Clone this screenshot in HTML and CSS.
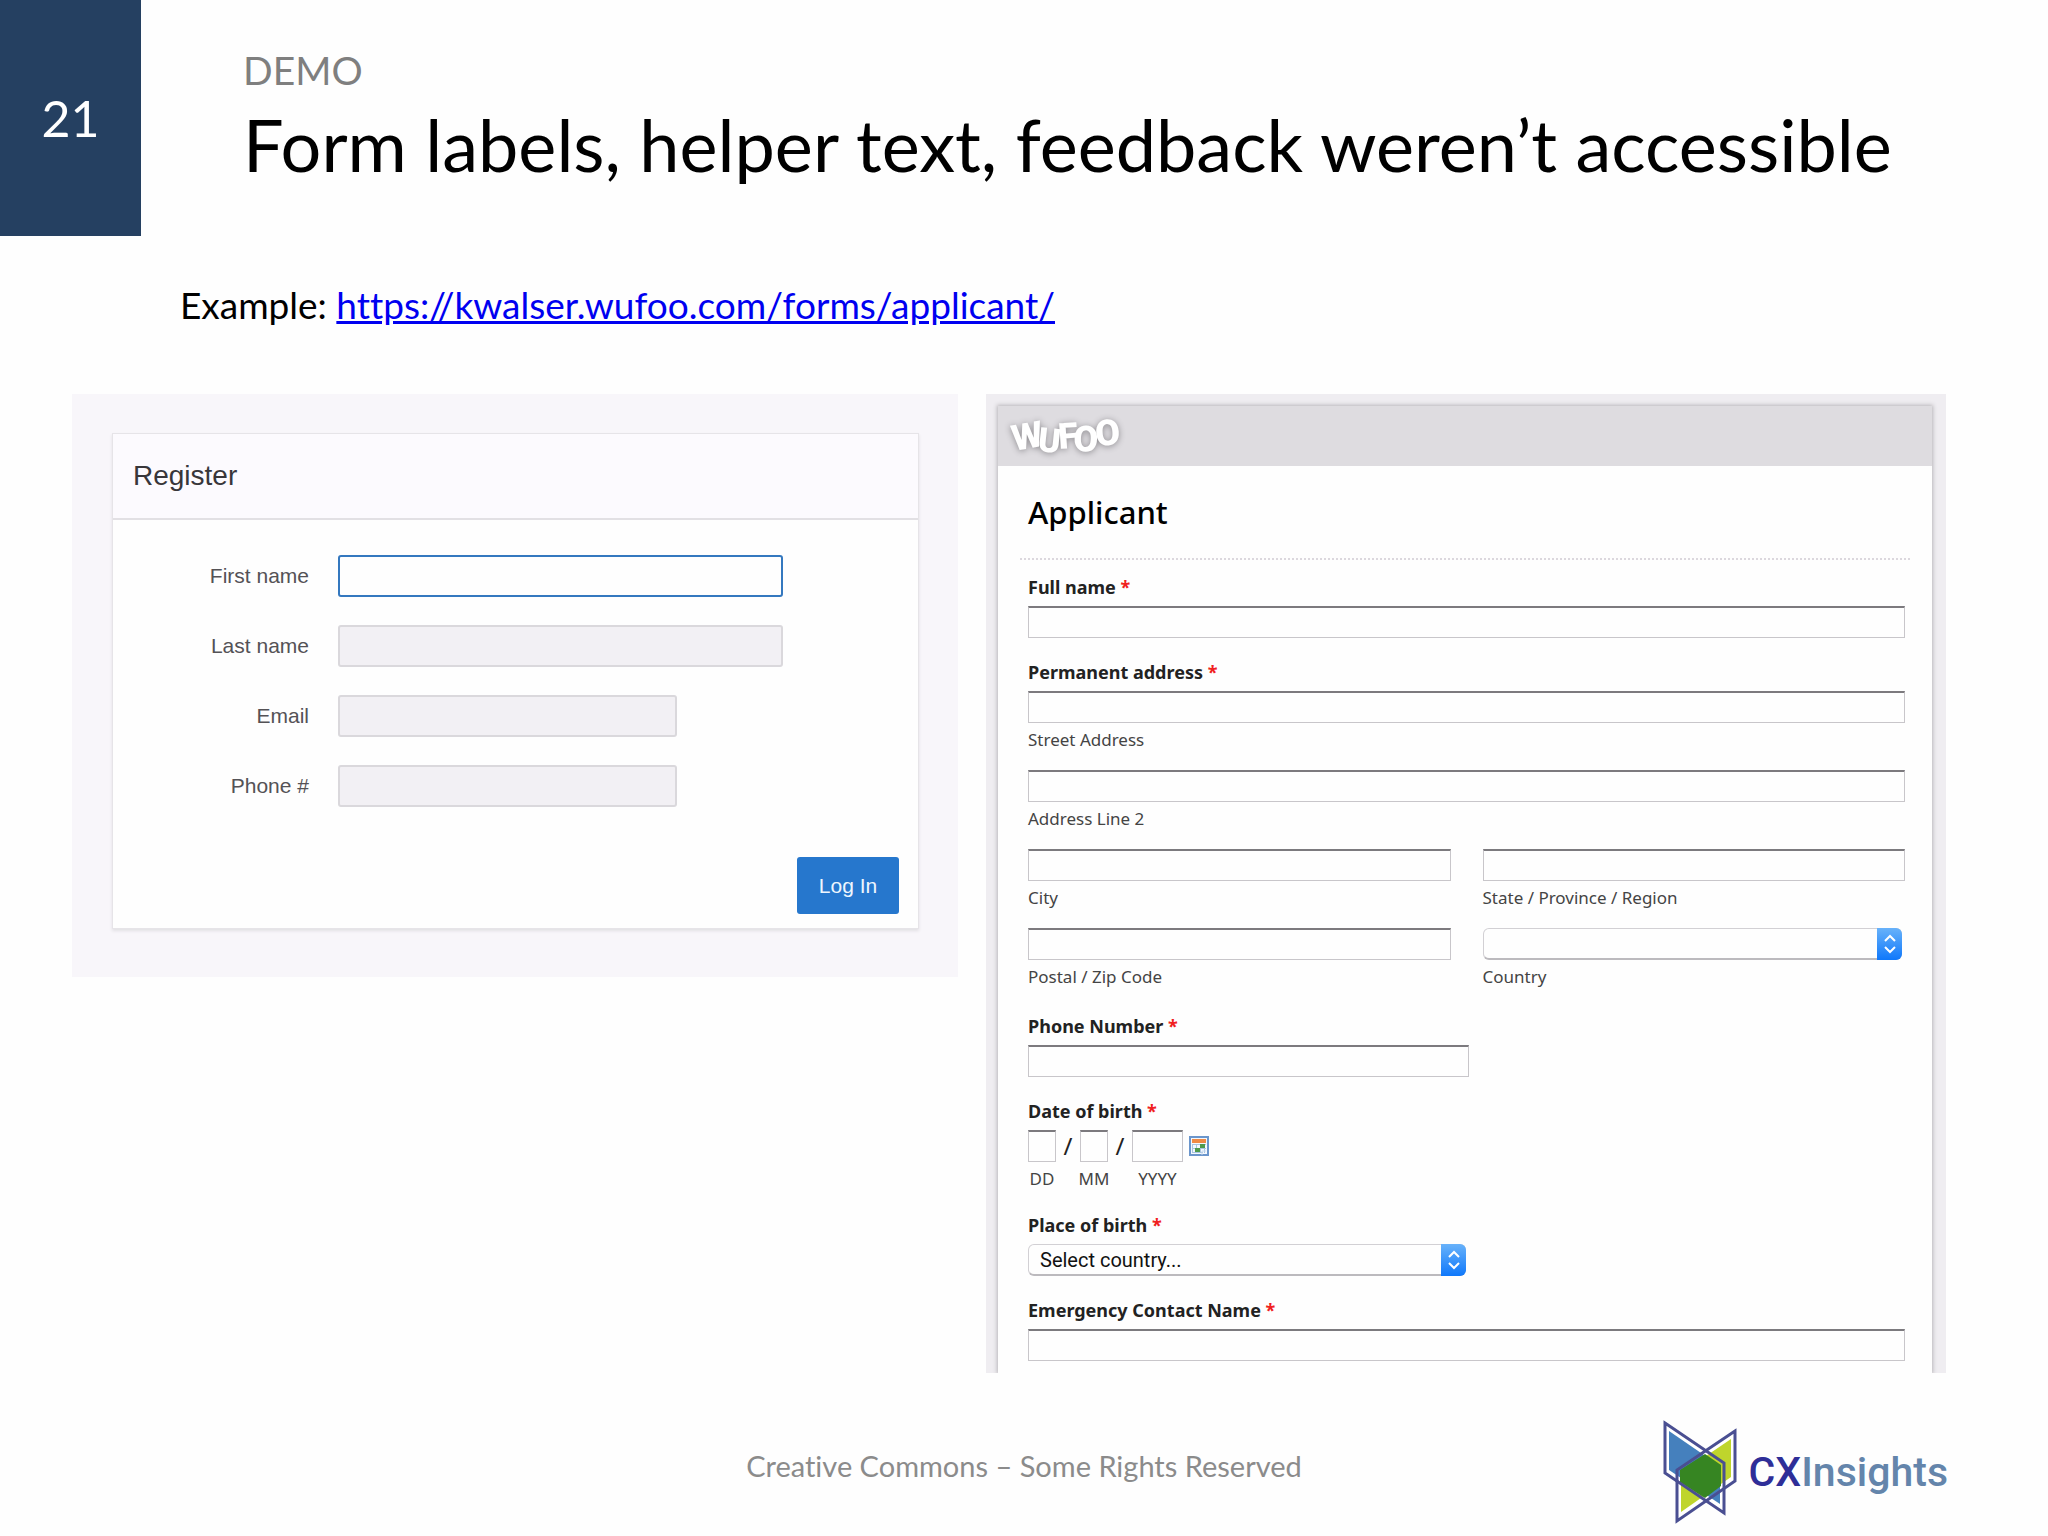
FILE: index.html
```html
<!DOCTYPE html>
<html lang="en">
<head>
    <meta charset="UTF-8">
    <meta name="viewport" content="width=device-width, initial-scale=1.0">
    <title>Form labels, helper text, feedback weren’t accessible</title>
    <link rel="stylesheet" href="styles.css">
</head>
<body>
    <header class="slide-header">
        <div class="slide-number">21</div>
        <div class="slide-heading">
            <p class="kicker">DEMO</p>
            <h1>Form labels, helper text, feedback weren’t accessible</h1>
        </div>
    </header>

    <main>
        <p class="example">Example: <a href="https://kwalser.wufoo.com/forms/applicant/">https://kwalser.wufoo.com/forms/applicant/</a></p>

        <div class="panels">
            <section class="register-panel">
                <form class="register-card">
                    <h2>Register</h2>
                    <div class="register-fields">
                        <label for="first-name">First name</label>
                        <input type="text" id="first-name" class="active">
                        <label for="last-name">Last name</label>
                        <input type="text" id="last-name">
                        <label for="email">Email</label>
                        <input type="email" id="email" class="short">
                        <label for="phone">Phone #</label>
                        <input type="tel" id="phone" class="short">
                    </div>
                    <div class="register-actions">
                        <button type="button">Log In</button>
                    </div>
                </form>
            </section>

            <section class="wufoo-panel">
                <form class="wufoo-form">
                    <div class="wufoo-bar">
                        <svg class="wufoo-logo" width="130" height="56" viewBox="0 0 130 56" role="img" aria-label="Wufoo">
                            <text transform="translate(12 43) rotate(-10)" font-size="36">W</text>
                            <text transform="translate(35 43) rotate(6)" font-size="34">U</text>
                            <text transform="translate(57 41) rotate(-4)" font-size="36">F</text>
                            <text transform="translate(71 43) rotate(2)" font-size="36">O</text>
                            <text transform="translate(94 38) rotate(-4)" font-size="36">O</text>
                        </svg>
                    </div>
                    <div class="wufoo-body">
                        <h2>Applicant</h2>

                        <div class="field">
                            <label class="title" for="full-name">Full name <span class="req">*</span></label>
                            <input type="text" id="full-name">
                        </div>

                        <fieldset class="field address">
                            <legend class="title">Permanent address <span class="req">*</span></legend>
                            <div class="sub wide">
                                <input type="text" id="street">
                                <label for="street">Street Address</label>
                            </div>
                            <div class="sub wide">
                                <input type="text" id="line2">
                                <label for="line2">Address Line 2</label>
                            </div>
                            <div class="sub">
                                <input type="text" id="city">
                                <label for="city">City</label>
                            </div>
                            <div class="sub">
                                <input type="text" id="state">
                                <label for="state">State / Province / Region</label>
                            </div>
                            <div class="sub">
                                <input type="text" id="zip">
                                <label for="zip">Postal / Zip Code</label>
                            </div>
                            <div class="sub">
                                <div class="select">
                                    <select id="country"><option></option></select>
                                    <svg width="25" height="32" viewBox="0 0 25 32"><path d="M8 13l5-5 5 5M8 19l5 5 5-5"/></svg>
                                </div>
                                <label for="country">Country</label>
                            </div>
                        </fieldset>

                        <div class="field half">
                            <label class="title" for="phone-number">Phone Number <span class="req">*</span></label>
                            <input type="tel" id="phone-number">
                        </div>

                        <fieldset class="field date">
                            <legend class="title">Date of birth <span class="req">*</span></legend>
                            <div class="sub day">
                                <input type="text" id="dd">
                                <label for="dd">DD</label>
                            </div>
                            <span class="slash">/</span>
                            <div class="sub day">
                                <input type="text" id="mm">
                                <label for="mm">MM</label>
                            </div>
                            <span class="slash">/</span>
                            <div class="sub year">
                                <input type="text" id="yyyy">
                                <label for="yyyy">YYYY</label>
                            </div>
                            <button type="button" class="calendar" aria-label="Pick a date">
                                <svg width="20" height="20" viewBox="0 0 20 20">
                                    <rect x="1" y="1" width="18" height="18" fill="#f4f8fd" stroke="#6b96cc" stroke-width="2"/>
                                    <rect x="3" y="3" width="14" height="4" fill="#f08a45"/>
                                    <path d="M3.500 8v9M7.500 8v9M11.500 8v9M15.500 8v9M3 8.500h14M3 12.500h14M3 16.500h11" stroke="#a9c4e0"/>
                                    <rect x="11" y="8" width="5" height="4" fill="#4f9a4c"/>
                                    <rect x="6" y="12" width="5" height="4" fill="#4f9a4c"/>
                                    <path d="M13 19v-4h4" fill="none" stroke="#c5d8ec"/>
                                </svg>
                            </button>
                        </fieldset>

                        <div class="field half">
                            <label class="title" for="birth-place">Place of birth <span class="req">*</span></label>
                            <div class="select">
                                <select id="birth-place"><option>Select country...</option></select>
                                <svg width="25" height="32" viewBox="0 0 25 32"><path d="M8 13l5-5 5 5M8 19l5 5 5-5"/></svg>
                            </div>
                        </div>

                        <div class="field">
                            <label class="title" for="emergency">Emergency Contact Name <span class="req">*</span></label>
                            <input type="text" id="emergency">
                        </div>
                    </div>
                </form>
            </section>
        </div>
    </main>

    <footer class="slide-footer">
        <p>Creative Commons – Some Rights Reserved</p>
        <div class="brand">
            <svg width="76" height="104" viewBox="0 0 76 104">
                <path d="M2 3l59 40v50L2 53z" fill="#fff"/>
                <path d="M72 11L14 50v51l58-40z" fill="#fff"/>
                <path d="M6 11l51 35v38L6 50z" fill="#4580bd"/>
                <path d="M68 19L18 53v39l50-35z" fill="#bfd52c"/>
                <path d="M42 34l16 11v21L42 78 17 62V50z" fill="#368522"/>
                <path d="M2 3l59 40v50L2 53z" fill="none" stroke="#4a4f92" stroke-width="3"/>
                <path d="M72 11L14 50v51l58-40z" fill="none" stroke="#4a4f92" stroke-width="3"/>
            </svg>
            <span class="brand-name"><b>CX</b>Insights</span>
        </div>
    </footer>
</body>
</html>
```
FILE: styles.css
```css
* {
    box-sizing: border-box;
}
body {
    margin: 0;
    min-height: 100vh;
    display: flex;
    flex-direction: column;
    background: #fefefe;
    color: #000;
    font-family: Lato, Carlito, Calibri, sans-serif;
    font-variant-ligatures: none;
}
h1, h2, p {
    margin: 0;
    font-weight: normal;
}
input, select, button {
    font: inherit;
}

/* Slide header */
.slide-header {
    display: flex;
    height: 236px;
}
.slide-number {
    width: 141px;
    padding-top: 86px;
    background: #254061;
    color: #fff;
    font-size: 50px;
    line-height: 64px;
    text-align: center;
}
.slide-heading {
    padding: 46px 0 0 102px;
}
.kicker {
    color: #7f7f7f;
    font-size: 39px;
    line-height: 48px;
}
.slide-heading h1 {
    font-size: 72px;
    line-height: 100px;
    white-space: nowrap;
}

.example {
    padding: 43px 0 0 180px;
    font-size: 37px;
    line-height: 52px;
}
.example a {
    color: #0000f0;
}
.panels {
    display: grid;
    grid-template-columns: 886fr 960fr;
    gap: 28px;
    align-items: start;
    padding: 63px 102px 0 72px;
}

/* Register form */
.register-panel {
    padding: 39px 39px 48px 40px;
    background: #f8f6fa;
    font-family: "Liberation Sans", Arial, sans-serif;
}
.register-card {
    border: 1px solid #e6e4e8;
    background: #fefefe;
    box-shadow: 0 2px 3px #e2e0e4;
}
.register-card h2 {
    padding: 0 20px;
    border-bottom: 2px solid #e2e0e4;
    background: #fcfafe;
    color: #38363a;
    font-size: 28px;
    line-height: 84px;
}
.register-fields {
    display: grid;
    grid-template-columns: 196px 445px;
    column-gap: 29px;
    row-gap: 28px;
    padding: 35px 0 0;
    align-items: center;
}
.register-fields label {
    color: #545256;
    font-size: 21px;
    text-align: right;
}
.register-fields input {
    width: 100%;
    height: 42px;
    padding: 4px 10px;
    border: 2px solid #dad8dc;
    border-radius: 3px;
    background: #f2f0f4;
}
.register-fields input.short {
    width: 339px;
}
.register-fields input.active {
    border-color: #3478bf;
    background: #fefefe;
}
.register-actions {
    display: flex;
    justify-content: flex-end;
    padding: 50px 19px 14px;
}
.register-actions button {
    width: 102px;
    height: 57px;
    border: 0;
    border-radius: 3px;
    background: #2677cd;
    color: #eef6fe;
    font-size: 21px;
}

/* Wufoo form */
.wufoo-panel {
    padding: 12px 14px 0 12px;
    background: #efedf1;
    color: #222;
    font-family: "Noto Sans", "Lucida Grande", sans-serif;
}
.wufoo-form {
    background: #fefefe;
    box-shadow: 0 0 4px 1px #b8b6ba;
    clip-path: inset(-6px -6px 0);
}
.wufoo-bar {
    height: 60px;
    padding-top: 2px;
    background: #dedce0;
}
.wufoo-logo {
    display: block;
    margin-left: 4px;
    overflow: visible;
    fill: #fff;
    font-family: Roboto, sans-serif;
    font-weight: 900;
    filter: drop-shadow(0 1px 3px #8c8a8e);
}
.wufoo-body {
    padding: 0 22px 12px;
}
.wufoo-body h2 {
    margin-bottom: 15px;
    padding: 23px 8px;
    border-bottom: 2px dotted #dcd8de;
    color: #000;
    font-size: 31px;
    font-weight: 500;
    line-height: 46px;
}
.field {
    display: flex;
    flex-direction: column;
    gap: 7px;
    margin: 0 5px 22px 8px;
    padding: 0;
    border: 0;
}
.field:last-child {
    margin-bottom: 0;
}
.title {
    padding: 0;
    font-size: 18px;
    font-weight: bold;
    line-height: 24px;
}
.req {
    color: #f02020;
}
.half {
    width: calc(50% - 4px);
}
.wufoo-body input {
    display: block;
    width: 100%;
    height: 32px;
    padding: 4px;
    border: 1px solid #c8c6ca;
    border-top: 2px solid #7c7a7e;
    background: #fefefe;
}
.sub label {
    display: block;
    margin-top: 5px;
    color: #444;
    font-size: 17px;
    line-height: 24px;
}
.address {
    display: grid;
    grid-template-columns: 1fr 1fr;
    gap: 18px 32px;
    margin-bottom: 25px;
}
.address .title, .date .title {
    margin-bottom: 7px;
}
.wide {
    grid-column: 1 / -1;
}
.date {
    flex-direction: row;
    gap: 0;
}
.day {
    width: 28px;
}
.day label, .year label {
    display: flex;
    justify-content: center;
}
.year {
    width: 51px;
}
.slash {
    width: 24px;
    font-size: 24px;
    line-height: 32px;
    text-align: center;
}
.calendar {
    height: 20px;
    margin: 6px;
    padding: 0;
    border: 0;
    background: none;
}
.calendar svg {
    display: block;
}
.select {
    position: relative;
    margin-right: 3px;
}
.select select {
    display: block;
    width: 100%;
    height: 32px;
    padding: 0 11px;
    border: 1px solid #d2d0d4;
    border-bottom: 2px solid #bcbabe;
    border-radius: 6px;
    appearance: none;
    background: #fefefe;
    color: #111;
    font-family: Roboto, sans-serif;
    font-size: 20px;
}
.select svg {
    position: absolute;
    top: 0;
    right: 0;
    border-radius: 0 6px 6px 0;
    background: linear-gradient(#68b2fa, #0f78fb);
    fill: none;
    stroke: #fff;
    stroke-width: 2;
    pointer-events: none;
}

/* Slide footer */
.slide-footer {
    display: grid;
    grid-template-columns: 1fr auto 1fr;
    align-items: center;
    margin-top: auto;
    padding: 0 100px 12px;
}
.slide-footer p {
    grid-column: 2;
    padding-bottom: 14px;
    color: #8b8b8b;
    font-size: 29px;
}
.brand {
    display: flex;
    align-items: center;
    justify-content: flex-end;
    gap: 10px;
}
.brand-name {
    color: #6485ab;
    font-family: Roboto, sans-serif;
    font-size: 41px;
    font-weight: 500;
}
.brand-name b {
    color: #2e2e98;
    font-weight: 500;
}
```
